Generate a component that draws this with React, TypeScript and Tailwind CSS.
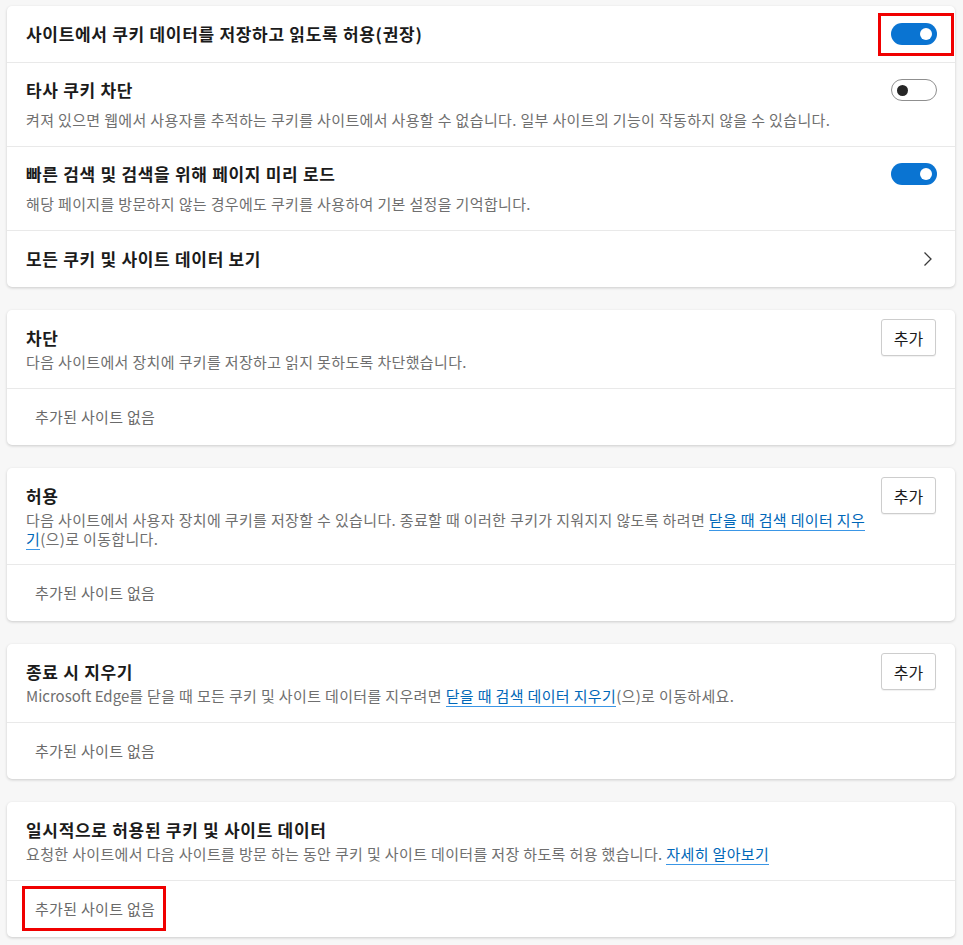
import type { ReactNode } from 'react';

const font = { fontFamily: '"Noto Sans CJK KR", "Noto Sans", sans-serif' };

function Toggle({ on }: { on: boolean }) {
  if (on) {
    return (
      <div className="w-[46px] h-[22px] rounded-full bg-[#0a74d2] flex items-center justify-end pr-[5px]">
        <div className="w-[12px] h-[12px] rounded-full bg-white" />
      </div>
    );
  }
  return (
    <div className="w-[46px] h-[22px] rounded-full bg-white border border-[#8f8f8f] flex items-center pl-[5px]">
      <div className="w-[11px] h-[11px] rounded-full bg-[#262626]" />
    </div>
  );
}

function Card({ children }: { children: ReactNode }) {
  return (
    <div className="bg-white rounded-[5px] shadow-[0_1px_3px_rgba(0,0,0,0.18)]">
      {children}
    </div>
  );
}

function AddButton() {
  return (
    <button className="shrink-0 w-[55px] h-[37px] mt-[-7px] border border-[#cdcdcd] rounded-[3px] bg-white text-[16px] text-[#1b1b1b] shadow-[0_1px_1px_rgba(0,0,0,0.06)]">
      추가
    </button>
  );
}

function Empty({ marked }: { marked?: boolean }) {
  return (
    <div className="h-[57px] flex items-center pl-[28px] border-t border-[#e9e9e9]">
      <span className="relative text-[15px] leading-[20px] tracking-[0.3px] text-[#6a6a6a]">
        추가된 사이트 없음
        {marked && <span className="absolute left-[-13px] right-[-11px] top-[-13px] bottom-[-12px] border-[3px] border-[#f00000]" />}
      </span>
    </div>
  );
}

function Link({ children }: { children: ReactNode }) {
  return <span className="text-[#0067b8] border-b-[1.5px] border-[#3a96e6]">{children}</span>;
}

const titleCls = 'text-[17px] leading-[24px] font-bold tracking-[0.7px] text-[#1b1b1b]';
const descCls = 'text-[15px] tracking-[0.35px] text-[#6f6f6f]';

function SiteSection({ title, desc, button, marked, tight }: { title: string; desc: ReactNode; button?: boolean; marked?: boolean; tight?: boolean }) {
  return (
    <Card>
      <div className="flex gap-[4px] pl-[19px] pr-[19px] pt-[16px] pb-[16px]">
        <div className="flex-1">
          <div className={titleCls}>{title}</div>
          <div className={`mt-[2px] ${descCls} ${tight ? 'leading-[19px]' : 'leading-[20px]'}`}>{desc}</div>
        </div>
        {button && <AddButton />}
      </div>
      <Empty marked={marked} />
    </Card>
  );
}

export default function App() {
  return (
    <div className="min-h-screen bg-[#f7f7f7] pl-[7px] pr-[8px] pt-[6px] pb-[6px] flex flex-col gap-[23px]" style={font}>
      <Card>
        <div className="h-[56px] flex items-center justify-between pl-[19px] pr-[18px]">
          <div className={titleCls}>사이트에서 쿠키 데이터를 저장하고 읽도록 허용(권장)</div>
          <div className="relative">
            <Toggle on />
            <span className="absolute left-[-13px] right-[-17px] top-[-10px] bottom-[-11px] border-[3px] border-[#f00000]" />
          </div>
        </div>
        <div className="border-t border-[#e9e9e9] pl-[19px] pr-[18px] pt-[15px] pb-[16px]">
          <div className="flex items-center justify-between h-[24px]">
            <div className={titleCls}>타사 쿠키 차단</div>
            <Toggle on={false} />
          </div>
          <div className={`mt-[8px] leading-[20px] ${descCls}`}>
            켜져 있으면 웹에서 사용자를 추적하는 쿠키를 사이트에서 사용할 수 없습니다. 일부 사이트의 기능이 작동하지 않을 수 있습니다.
          </div>
        </div>
        <div className="border-t border-[#e9e9e9] pl-[19px] pr-[18px] pt-[15px] pb-[16px]">
          <div className="flex items-center justify-between h-[24px]">
            <div className={titleCls}>빠른 검색 및 검색을 위해 페이지 미리 로드</div>
            <Toggle on />
          </div>
          <div className={`mt-[8px] leading-[20px] ${descCls}`}>
            해당 페이지를 방문하지 않는 경우에도 쿠키를 사용하여 기본 설정을 기억합니다.
          </div>
        </div>
        <div className="h-[57px] border-t border-[#e9e9e9] flex items-center justify-between pl-[19px] pr-[22px]">
          <div className={titleCls}>모든 쿠키 및 사이트 데이터 보기</div>
          <svg width="10" height="16" viewBox="0 0 10 16" fill="none">
            <path d="M1.5 1.5 L8 8 L1.5 14.5" stroke="#3a3a3a" strokeWidth="1.3" />
          </svg>
        </div>
      </Card>

      <SiteSection title="차단" desc="다음 사이트에서 장치에 쿠키를 저장하고 읽지 못하도록 차단했습니다." button />

      <SiteSection
        title="허용"
        button
        tight
        desc={
          <>
            다음 사이트에서 사용자 장치에 쿠키를 저장할 수 있습니다. 종료할 때 이러한 쿠키가 지워지지 않도록 하려면{' '}
            <Link>닫을 때 검색 데이터 지우</Link>
            <br />
            <Link>기</Link>(으)로 이동합니다.
          </>
        }
      />

      <SiteSection
        title="종료 시 지우기"
        button
        desc={
          <>
            <span className="tracking-normal">Microsoft Edge</span>를 닫을 때 모든 쿠키 및 사이트 데이터를 지우려면 <Link>닫을 때 검색 데이터 지우기</Link>(으)로 이동하세요.
          </>
        }
      />

      <SiteSection
        title="일시적으로 허용된 쿠키 및 사이트 데이터"
        marked
        desc={
          <>
            요청한 사이트에서 다음 사이트를 방문 하는 동안 쿠키 및 사이트 데이터를 저장 하도록 허용 했습니다. <Link>자세히 알아보기</Link>
          </>
        }
      />
    </div>
  );
}
